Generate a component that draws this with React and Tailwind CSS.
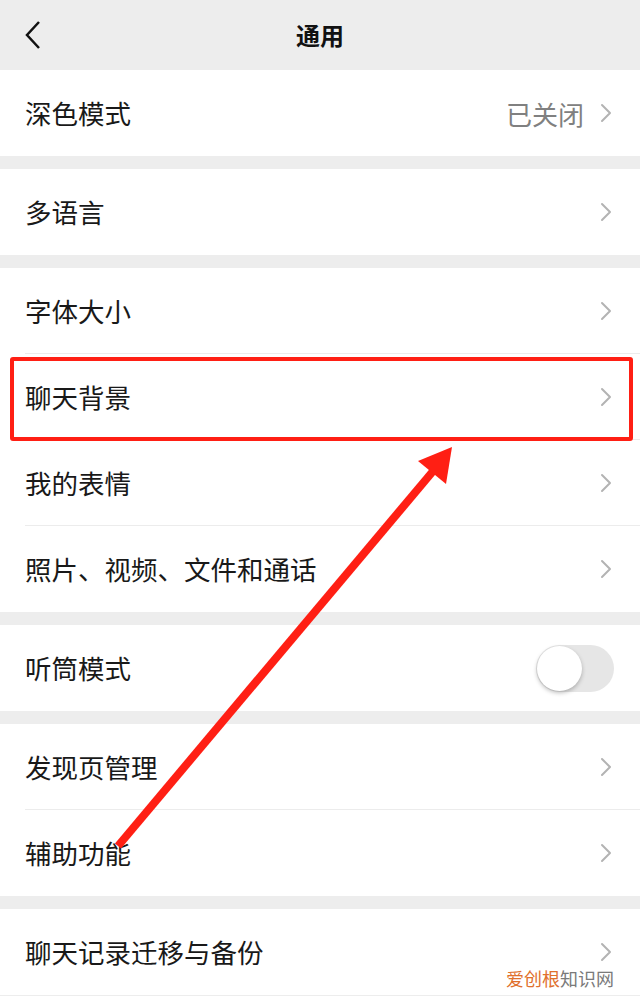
import React from 'react';

const font = { fontFamily: '"Noto Sans CJK SC", "Noto Sans", sans-serif' };

function Chevron() {
    return (
        <svg width="12" height="20" viewBox="0 0 12 20" className="shrink-0">
            <polyline points="2,2 10,10 2,18" fill="none" stroke="#b3b3b3" strokeWidth="2" strokeLinecap="round" strokeLinejoin="round" />
        </svg>
    );
}

function Row({ label, value, divider, toggle }) {
    return (
        <div className="relative h-[86px] bg-white flex items-center pl-[25px] pr-[28px]">
            <span className="flex-1 text-[26.5px] text-[#191919]">{label}</span>
            {value && <span className="text-[26px] text-[#808080] mr-[16px]">{value}</span>}
            {toggle ? (
                <div className="relative w-[78px] h-[47px] rounded-full bg-[#e6e6e6] mr-[-2px]">
                    <div className="absolute left-[1px] top-[1px] w-[45px] h-[45px] rounded-full bg-white shadow-[0_2px_4px_rgba(0,0,0,0.25)]" />
                </div>
            ) : (
                <Chevron />
            )}
            {divider && <div className="absolute bottom-0 left-[25px] right-0 h-px bg-[#ececec]" />}
        </div>
    );
}

export default function App() {
    return (
        <div className="relative w-[640px] h-[996px] overflow-hidden bg-[#ededed]" style={font}>
            {/* Header */}
            <div className="relative h-[70px] flex items-center justify-center">
                <svg width="18" height="30" viewBox="0 0 18 30" className="absolute left-[24px] top-[20px]">
                    <polyline points="15,2 3,15 15,28" fill="none" stroke="#111" strokeWidth="2.5" strokeLinejoin="miter" />
                </svg>
                <span className="text-[24px] font-bold text-[#111]">通用</span>
            </div>

            <div className="flex flex-col gap-[13px]">
                <Row label="深色模式" value="已关闭" />
                <Row label="多语言" />
                <div className="flex flex-col">
                    <Row label="字体大小" divider />
                    <Row label="聊天背景" divider />
                    <Row label="我的表情" divider />
                    <Row label="照片、视频、文件和通话" />
                </div>
                <Row label="听筒模式" toggle />
                <div className="flex flex-col">
                    <Row label="发现页管理" divider />
                    <Row label="辅助功能" />
                </div>
                <Row label="聊天记录迁移与备份" />
            </div>

            {/* Annotation box */}
            <div className="absolute left-[10px] top-[357px] w-[623px] h-[84px] border-[4px] border-[#ff1f14] rounded-[3px]" />

            {/* Annotation arrow */}
            <svg className="absolute left-0 top-0" width="640" height="996" viewBox="0 0 640 996">
                <line x1="118" y1="846" x2="434" y2="470" stroke="#ff1f14" strokeWidth="8" />
                <polygon points="452,447 418,461 446,484" fill="#ff1f14" />
            </svg>

            {/* Watermark */}
            <div className="absolute right-[26px] bottom-[9px] text-[18px] leading-none">
                <span className="text-[#e0702c]">爱创根</span>
                <span className="text-[#7a7a7a]">知识网</span>
            </div>
        </div>
    );
}
